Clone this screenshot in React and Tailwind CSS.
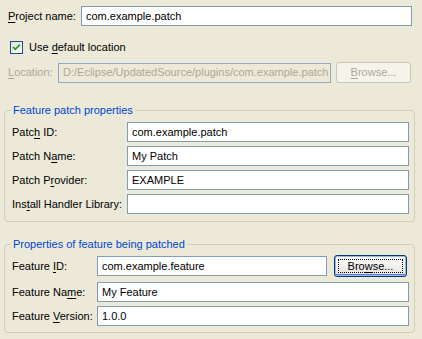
import React from 'react';

function M({ children }) {
  return <span className="underline underline-offset-[2px] decoration-1">{children}</span>;
}

function TextField({ value, className = '', disabled = false }) {
  return (
    <div
      className={`h-[20px] flex items-center px-[4px] border whitespace-nowrap overflow-hidden ${
        disabled ? 'bg-[#ECE9D8] border-[#8FA9C6] text-[#ACA899]' : 'bg-white border-[#7F9DB9] text-black'
      } ${className}`}
    >
      {value}
    </div>
  );
}

function Group({ title, className = '', children }) {
  return (
    <div className={`relative ml-[4px] w-[411px] border border-[#D0D0BF] rounded-[4px] ${className}`}>
      <span className="absolute -top-[7px] left-[6px] px-[2px] bg-[#ECE9D8] text-[#0046D5]">{title}</span>
      {children}
    </div>
  );
}

function Row({ label, value, labelWidth }) {
  return (
    <div className="flex items-center">
      <label className={labelWidth}>{label}</label>
      <TextField className="flex-1" value={value} />
    </div>
  );
}

function Checkbox() {
  return (
    <svg width="13" height="13" viewBox="0 0 13 13" className="shrink-0">
      <defs>
        <linearGradient id="cb" x1="0" y1="0" x2="1" y2="1">
          <stop offset="0" stopColor="#DCDCD7" />
          <stop offset="1" stopColor="#FFFFFF" />
        </linearGradient>
      </defs>
      <rect x="0.5" y="0.5" width="12" height="12" fill="url(#cb)" stroke="#1C5180" />
      <path d="M3 6 L5.2 8.3 L10 3.6" fill="none" stroke="#21A121" strokeWidth="1.8" />
    </svg>
  );
}

export default function App() {
  return (
    <div className="w-[422px] h-[339px] bg-[#ECE9D8] text-[11px] leading-[13px] text-black font-['Tahoma','Liberation_Sans',sans-serif] overflow-hidden">
      <div className="flex items-center pt-[6px] pl-[8px]">
        <label className="w-[73px]">
          <M>P</M>roject name:
        </label>
        <TextField className="w-[331px]" value="com.example.patch" />
      </div>

      <div className="flex items-center gap-[6px] mt-[15px] pl-[10px]">
        <Checkbox />
        <span>
          Use <M>d</M>efault location
        </span>
      </div>

      <div className="flex items-center h-[21px] mt-[8px] pl-[8px]">
        <label className="w-[50px] text-[#ACA899]">
          <M>L</M>ocation:
        </label>
        <TextField className="w-[273px]" disabled value="D:/Eclipse/UpdatedSource/plugins/com.example.patch" />
        <button className="ml-[5px] w-[75px] h-[21px] rounded-[3px] border border-[#C9C7BA] bg-[#F5F4EA] text-[#ACA899]">
          <M>B</M>rowse...
        </button>
      </div>

      <Group title="Feature patch properties" className="mt-[27px] pt-[11px] pb-[7px] pl-[7px] pr-[5px]">
        <div className="flex flex-col gap-[4px]">
          <Row labelWidth="w-[115px]" value="com.example.patch" label={<>Patc<M>h</M> ID:</>} />
          <Row labelWidth="w-[115px]" value="My Patch" label={<>Patch N<M>a</M>me:</>} />
          <Row labelWidth="w-[115px]" value="EXAMPLE" label={<>Patch P<M>r</M>ovider:</>} />
          <Row labelWidth="w-[115px]" value="" label={<>Ins<M>t</M>all Handler Library:</>} />
        </div>
      </Group>

      <Group title="Properties of feature being patched" className="mt-[22px] pt-[10px] pb-[6px] pl-[7px] pr-[5px]">
        <div className="flex items-center h-[22px]">
          <label className="w-[85px]">
            Feature <M>I</M>D:
          </label>
          <TextField className="flex-1" value="com.example.feature" />
          <button className="relative ml-[7px] mr-[2px] w-[73px] h-[22px] rounded-[3px] border border-[#003C74] bg-gradient-to-b from-white to-[#E3E2DA] shadow-[inset_0_0_0_1px_#9DB7E8,inset_0_-1px_0_1px_#5F7CDB] text-black">
            <span className="absolute inset-[3px] border border-dotted border-black" />
            Bro<M>w</M>se...
          </button>
        </div>
        <div className="flex flex-col gap-[4px] mt-[5px]">
          <Row labelWidth="w-[85px]" value="My Feature" label={<>Feature Na<M>m</M>e:</>} />
          <Row labelWidth="w-[85px]" value="1.0.0" label={<>Feature <M>V</M>ersion:</>} />
        </div>
      </Group>
    </div>
  );
}
